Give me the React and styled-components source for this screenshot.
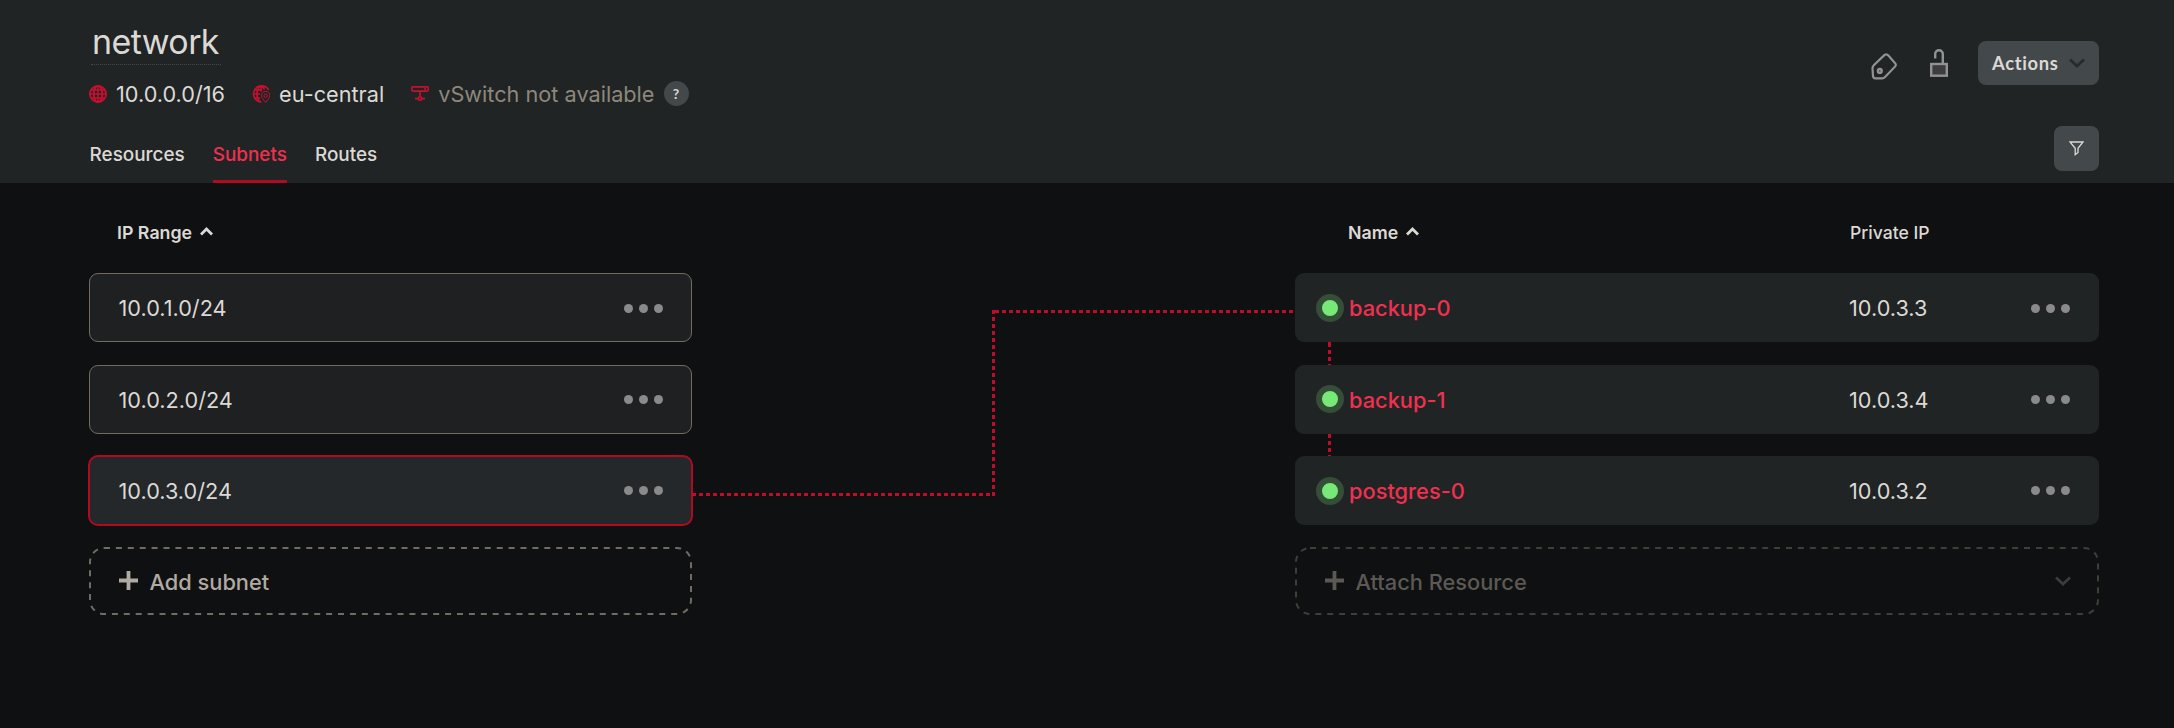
import React from "react";
import styled, { createGlobalStyle, css } from "styled-components";

const GlobalStyle = createGlobalStyle`
  * { box-sizing: border-box; }
  body {
    margin: 0;
    background: #0f1012;
    color: #dcd9d4;
    font-family: Inter, "Liberation Sans", sans-serif;
  }
  button { font: inherit; color: inherit; border: 0; padding: 0; background: none; }
`;

const Page = styled.div`
  height: 728px;
  overflow: hidden;
  background: #0f1012;
`;

const Header = styled.header`
  height: 183px;
  padding: 0 75px 0 89px;
  background: #202425;
  display: flex;
  justify-content: space-between;
`;

const Summary = styled.div`
  display: flex;
  flex-direction: column;
  align-items: flex-start;
`;

const Title = styled.h1`
  margin: 20px 0 0 2px;
  height: 45px;
  padding: 0 2px 0 1px;
  border-bottom: 1px dotted #45494a;
  font-size: 34px;
  letter-spacing: -0.6px;
  line-height: 43px;
  font-weight: 400;
`;

const Facts = styled.div`
  margin-top: 14px;
  height: 30px;
  display: flex;
  align-items: center;
`;

const Fact = styled.div`
  display: flex;
  align-items: center;
  gap: 9px;
  margin-right: 27px;
  font-size: 21.7px;
  line-height: 30px;
  white-space: nowrap;
  color: ${(p) => (p.$muted ? "#8f877b" : "#dcd9d4")};
  svg { flex: none; margin-top: -1px; }
`;

const Help = styled.span`
  width: 25px;
  height: 25px;
  border-radius: 50%;
  background: #43484b;
  color: #dcd9d4;
  font: 700 14px/25px Lato, sans-serif;
  text-align: center;
  margin-top: -1px;
`;

const Tabs = styled.nav`
  margin: 30px 0 0 0.6px;
  height: 44px;
  display: flex;
  gap: 28px;
`;

const Tab = styled.a`
  height: 44px;
  font-size: 18.9px;
  line-height: 32px;
  font-weight: 500;
  color: ${(p) => (p.$active ? "#f0304f" : "#dcd9d4")};
  border-bottom: 3px solid ${(p) => (p.$active ? "#b10a22" : "transparent")};
`;

const Tools = styled.div`
  display: flex;
  flex-direction: column;
  align-items: flex-end;
  padding-top: 41px;
  gap: 41px;
`;

const ToolRow = styled.div`
  display: flex;
  align-items: flex-start;
  height: 44px;
`;

const ToolIcon = styled.button`
  display: flex;
  margin: ${(p) => p.$margin};
`;

const ActionsButton = styled.button`
  && { font: 700 18.4px/43px Lato, sans-serif; padding: 0 14px; letter-spacing: 0.65px; }
  width: 121px;
  height: 44px;
  display: flex;
  align-items: center;
  justify-content: space-between;
  border-radius: 8px;
  background: #43484b;
`;

const FilterButton = styled.button`
  width: 45px;
  height: 45px;
  border-radius: 8px;
  background: #43484b;
  display: grid;
  place-items: center;
`;

const Main = styled.main`
  display: grid;
  grid-template-columns: 603px 603px 804px;
  padding: 33px 75px 0 89px;
`;

const ColumnHead = styled.div`
  height: 57px;
  display: flex;
  padding-left: ${(p) => p.$indent}px;
  font-size: 17.8px;
  line-height: 33px;
  font-weight: 600;
`;

const SortLabel = styled.span`
  display: flex;
  gap: 8px;
  svg { margin-top: 11px; }
`;

const PlainLabel = styled.span`
  margin-left: auto;
  width: 249px;
  font-size: 17.6px;
  font-weight: 500;
`;

const List = styled.div`
  display: flex;
  flex-direction: column;
`;

const rowBase = css`
  height: 69px;
  display: flex;
  align-items: center;
  border-radius: 9px;
  font-size: 21.7px;
  line-height: 30px;
`;

const SubnetRow = styled.div`
  ${rowBase}
  justify-content: space-between;
  padding: 0 28px 0 28.5px;
  margin-bottom: ${(p) => p.$gap}px;
  background: ${(p) => (p.$selected ? "#24282b" : "#1f2022")};
  border: 1px solid ${(p) => (p.$selected ? "#b10a22" : "#746b60")};
  box-shadow: ${(p) => (p.$selected ? "0 0 0 1px #b10a22" : "none")};
`;

const ResourceRow = styled.div`
  ${rowBase}
  background: #202425;
  padding: 0 29px 0 21px;
`;

const ResourceName = styled.a`
  margin-left: 5px;
  flex: 1;
  font-size: 21.8px;
  font-weight: 500;
  color: #f0304f;
`;

const Address = styled.span`
  width: 182px;
`;

const StatusDot = styled.span`
  width: 28px;
  height: 28px;
  border-radius: 50%;
  border: 6px solid #344e37;
  background: #77e977;
  margin-top: ${(p) => p.$shift}px;
`;

const MenuDots = styled.button`
  width: 39px;
  display: flex;
  justify-content: space-between;
  margin-top: ${(p) => p.$shift || 0}px;
  span { width: 9px; height: 9px; border-radius: 50%; background: #8a8a8a; }
`;

const RowLink = styled.div`
  width: 3px;
  height: ${(p) => p.$height}px;
  margin-left: 33px;
  background: repeating-linear-gradient(#c00c28 0 4px, transparent 4px 7px) 0 ${(p) => p.$offset}px;
`;

const AddRow = styled.button`
  && { padding: 0 28px 0 29.5px; }
  position: relative;
  height: 68px;
  margin-top: ${(p) => p.$top || 0}px;
  display: flex;
  align-items: center;
  border-radius: 15px;
  && { font-size: 21.8px; line-height: 30px; font-weight: 500; }
  && { color: ${(p) => (p.$disabled ? "#5c5954" : "#b0aaa0")}; }
  span { flex: 1; margin: 2px 0 0 12px; text-align: left; }
`;

const DashOutline = styled.svg`
  position: absolute;
  inset: 0;
  width: 100%;
  height: 100%;
  fill: none;
  stroke: ${(p) => p.$color};
  stroke-width: 2;
  stroke-dasharray: 6 5.9;
  rect { x: 1px; y: 1px; width: calc(100% - 2px); height: calc(100% - 2px); rx: 14px; }
`;

const Connector = styled.svg`
  display: block;
  width: 603px;
  height: 400px;
`;

const Glyph = ({ size = 18, w, h, box, children, color = "#c8102e", ...rest }) => (
  <svg width={w || size} height={h || size} viewBox={box || `0 0 ${w || size} ${h || size}`} fill="none" stroke={color} {...rest}>
    {children}
  </svg>
);

const GlobeIcon = () => (
  <Glyph strokeWidth="1.8">
    <circle cx="9" cy="9" r="8.1" />
    <ellipse cx="9" cy="9" rx="4.2" ry="8.1" />
    <path d="M9 1v16M1 9h16M2 5h14M2 13h14" strokeWidth="1.5" />
  </Glyph>
);

const LocationIcon = () => (
  <Glyph strokeWidth="1.7">
    <path d="M16.6 4.8A8.1 8.1 0 1 0 9.4 17.1M9 1v5.500M1 9h7M2 5h8M2 13h6M9 .9C3.800 3.500 3.500 14 8.700 17M9 .9q2.500 1 3.400 3.600" strokeWidth="1.6" />
    <path d="M13.700 17.400C11.500 14.700 9.600 12.900 9.600 10.500a4.100 4.100 0 0 1 8.200 0c0 2.400-1.900 4.200-4.100 6.900z" fill="#202425" strokeWidth="1" />
    <circle cx="13.700" cy="10.700" r="1.700" strokeWidth="1" />
  </Glyph>
);

const SwitchIcon = () => (
  <Glyph w={18} h={15} strokeWidth="1.600">
    <rect x=".8" y=".9" width="16.400" height="4.200" rx="1" />
    <path d="M9 5v5.500M4 12.600h3.200M10.800 12.600H14M13 3h2" />
    <circle cx="9" cy="12.400" r="1.700" />
  </Glyph>
);

const TagIcon = () => (
  <Glyph w={26} h={27} color="#929292" strokeWidth="2.2">
    <path d="M13.600 1.900 2.800 12.300Q1.500 13.600 1.500 15.200L2 23.200Q2.200 25.300 4.200 25.300L11.200 25.300Q12.600 25.300 13.800 24.200L24.200 13.400Q25.300 12 24.400 10.600L17.400 2.500Q15.600 .5 13.600 1.900z" />
    <circle cx="8.800" cy="17.900" r="1.900" strokeWidth="2.400" />
  </Glyph>
);

const UnlockIcon = () => (
  <Glyph w={18} h={28} color="#929292" strokeWidth="2.400">
    <path d="M5.200 9.600V5a3.800 3.800 0 0 1 7.600 0V15" />
    <rect x="1.200" y="15" width="15.600" height="11.700" fill="#3d3d3d" />
  </Glyph>
);

const ChevronIcon = ({ w = 16, h = 10, color, width = 2.8, up }) => (
  <Glyph w={w} h={h} color={color} strokeWidth={width}>
    <path d={up ? `M1 ${h - 1.500}L${w / 2} 2L${w - 1} ${h - 1.500}` : `M1 1.500L${w / 2} ${h - 2}L${w - 1} 1.500`} />
  </Glyph>
);

const FilterIcon = () => (
  <Glyph w={15} h={15} color="#dcd9d4" strokeWidth="1.300">
    <path d="M1 1h13L9 7.300v4.200L6.200 13.600V7.300z" />
  </Glyph>
);

const PlusIcon = () => (
  <Glyph w={19} h={19} color="currentColor" strokeWidth="3.800" style={{ marginTop: -1 }}>
    <path d="M9.500 0v19M0 9.500h19" />
  </Glyph>
);

const Menu = ({ shift }) => (
  <MenuDots $shift={shift} aria-label="More"><span /><span /><span /></MenuDots>
);

const subnets = [
  { range: "10.0.1.0/24", gap: 23, shift: 2 },
  { range: "10.0.2.0/24", gap: 22 },
  { range: "10.0.3.0/24", gap: 22, selected: true },
];

const resources = [
  { name: "backup-0", ip: "10.0.3.3", shift: 2, dotShift: 1, link: { height: 23, offset: 1 } },
  { name: "backup-1", ip: "10.0.3.4", dotShift: -1, link: { height: 22, offset: 0 } },
  { name: "postgres-0", ip: "10.0.3.2", dotShift: 1 },
];

export default function App() {
  return (
    <Page>
      <GlobalStyle />
      <Header>
        <Summary>
          <Title>network</Title>
          <Facts>
            <Fact><GlobeIcon />10.0.0.0/16</Fact>
            <Fact><LocationIcon />eu-central</Fact>
            <Fact $muted><SwitchIcon />vSwitch not available<Help>?</Help></Fact>
          </Facts>
          <Tabs>
            <Tab>Resources</Tab>
            <Tab $active>Subnets</Tab>
            <Tab>Routes</Tab>
          </Tabs>
        </Summary>
        <Tools>
          <ToolRow>
            <ToolIcon $margin="12px 33px 0 0" aria-label="Labels"><TagIcon /></ToolIcon>
            <ToolIcon $margin="8px 30px 0 0" aria-label="Protection"><UnlockIcon /></ToolIcon>
            <ActionsButton>Actions<ChevronIcon color="#282b2d" /></ActionsButton>
          </ToolRow>
          <FilterButton aria-label="Filter"><FilterIcon /></FilterButton>
        </Tools>
      </Header>
      <Main>
        <section>
          <ColumnHead $indent={28}>
            <SortLabel>IP Range<ChevronIcon up w={13} h={9} color="#dcd9d4" /></SortLabel>
          </ColumnHead>
          <List>
            {subnets.map((s) => (
              <SubnetRow key={s.range} $gap={s.gap} $selected={s.selected}>
                {s.range}<Menu shift={s.shift} />
              </SubnetRow>
            ))}
            <AddRow>
              <DashOutline $color="#746b60"><rect /></DashOutline>
              <PlusIcon /><span>Add subnet</span>
            </AddRow>
          </List>
        </section>
        <Connector viewBox="0 0 603 400" fill="none" stroke="#c00c28" strokeWidth="3" strokeDasharray="4 3">
          <path d="M0 278.500H300" />
          <path d="M301.500 94V280" />
          <path d="M303 95.500H603" />
        </Connector>
        <section>
          <ColumnHead $indent={53}>
            <SortLabel>Name<ChevronIcon up w={13} h={9} color="#dcd9d4" /></SortLabel>
            <PlainLabel>Private IP</PlainLabel>
          </ColumnHead>
          <List>
            {resources.map((r) => (
              <React.Fragment key={r.name}>
                <ResourceRow>
                  <StatusDot $shift={r.dotShift} />
                  <ResourceName>{r.name}</ResourceName>
                  <Address>{r.ip}</Address>
                  <Menu shift={r.shift} />
                </ResourceRow>
                {r.link && <RowLink $height={r.link.height} $offset={r.link.offset} />}
              </React.Fragment>
            ))}
            <AddRow $disabled $top={22}>
              <DashOutline $color="#413d37"><rect /></DashOutline>
              <PlusIcon /><span>Attach Resource</span><ChevronIcon color="#3c3c3c" />
            </AddRow>
          </List>
        </section>
      </Main>
    </Page>
  );
}
